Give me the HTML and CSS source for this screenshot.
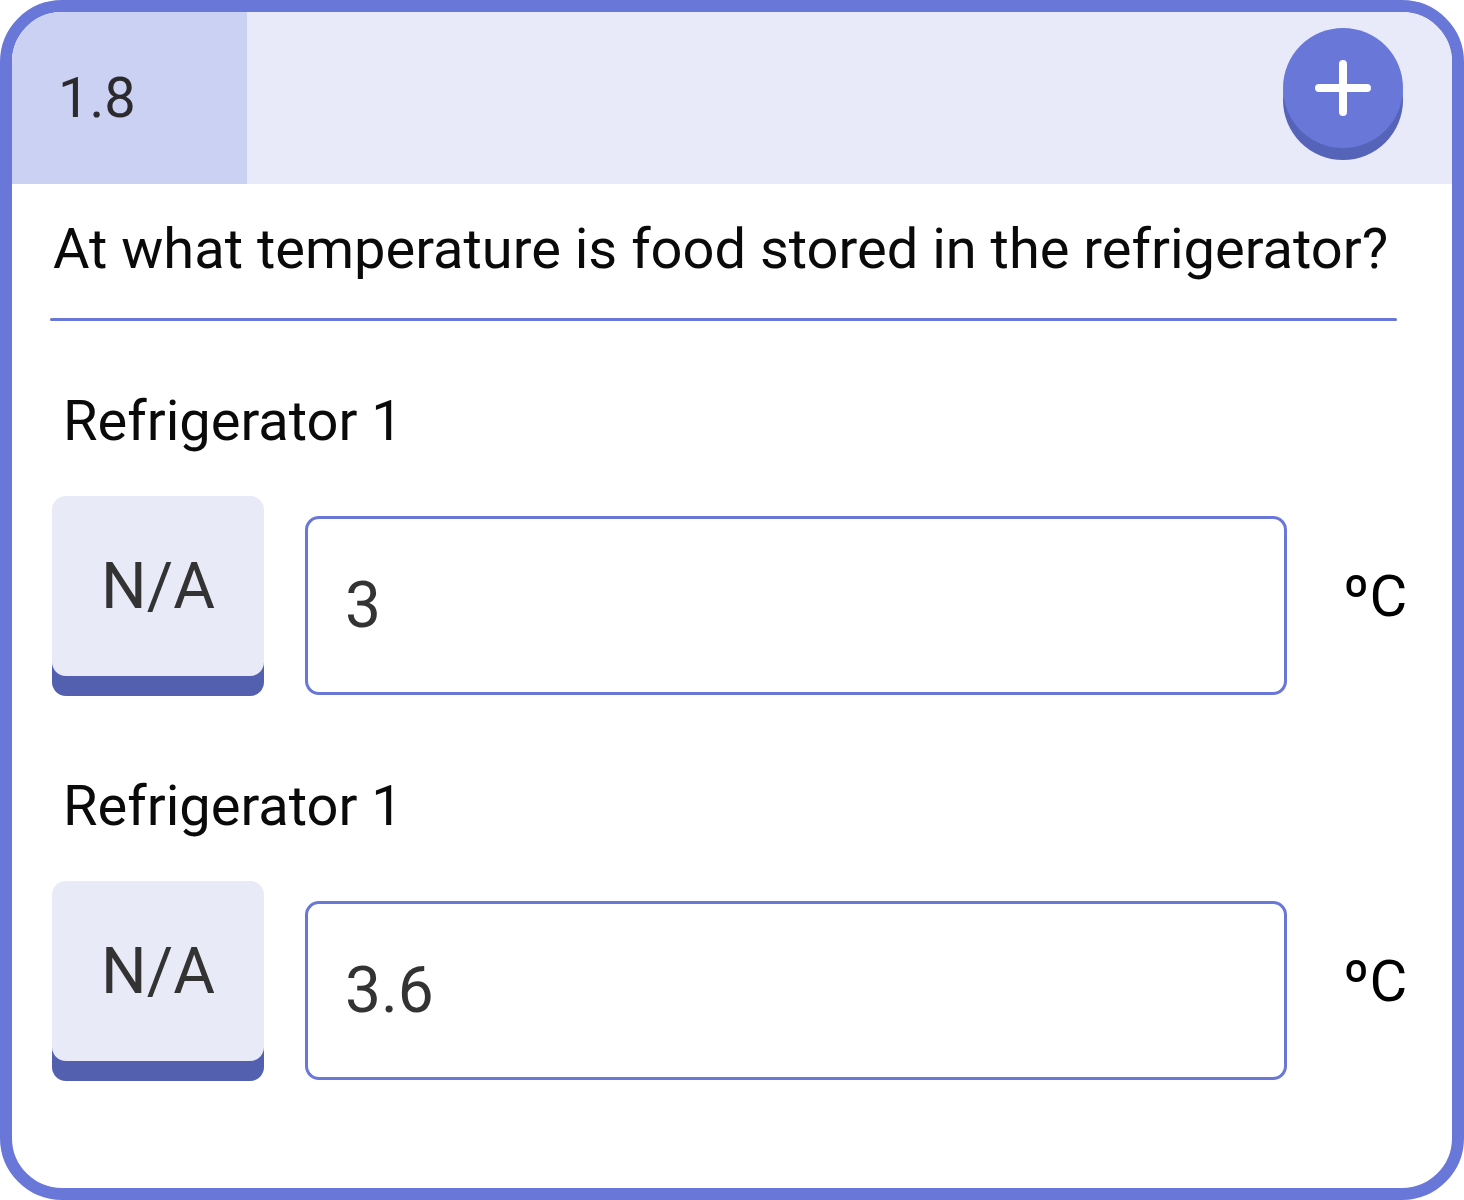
FILE: index.html
```html
<!DOCTYPE html>
<html lang="en">
<head>
<meta charset="utf-8">
<title>Question 1.8</title>
<link rel="stylesheet" href="styles.css">
</head>
<body>
<div class="card">
  <div class="card-header">
    <div class="q-number">1.8</div>
    <button class="add-btn" type="button" aria-label="Add">
      <svg width="60" height="60" viewBox="0 0 60 60" aria-hidden="true">
        <path d="M30 6 V54 M6 30 H54" stroke="#ffffff" stroke-width="8" stroke-linecap="round" fill="none"/>
      </svg>
    </button>
  </div>
  <div class="card-body">
    <div class="question">At what temperature is food stored in the refrigerator?</div>
    <div class="divider"></div>
    <div class="entry">
      <div class="entry-label">Refrigerator 1</div>
      <div class="entry-row">
        <button class="na-btn" type="button">N/A</button>
        <div class="value-box">3</div>
        <div class="unit">ºC</div>
      </div>
    </div>
    <div class="entry">
      <div class="entry-label">Refrigerator 1</div>
      <div class="entry-row">
        <button class="na-btn" type="button">N/A</button>
        <div class="value-box">3.6</div>
        <div class="unit">ºC</div>
      </div>
    </div>
  </div>
</div>
</body>
</html>
```
FILE: styles.css
```css
html, body {
  margin: 0;
  padding: 0;
  background: #ffffff;
}

body {
  font-family: Roboto, "Liberation Sans", sans-serif;
}

.card {
  width: 1464px;
  height: 1200px;
  box-sizing: border-box;
  border: 12px solid #6877d8;
  border-radius: 62px;
  overflow: hidden;
  background: #ffffff;
}

.card-header {
  height: 172px;
  display: flex;
  align-items: flex-start;
  background: #e8eaf9;
}

.q-number {
  width: 235px;
  height: 172px;
  flex-shrink: 0;
  box-sizing: border-box;
  padding-left: 46px;
  display: flex;
  align-items: center;
  background: #cbd1f2;
  font-size: 56px;
  color: #2b2b2f;
}

.add-btn {
  margin-left: auto;
  margin-right: 49px;
  margin-top: 16px;
  width: 120px;
  height: 120px;
  flex-shrink: 0;
  border: none;
  padding: 0;
  border-radius: 50%;
  background: #6877d8;
  box-shadow: 0 12px 0 #5563b8;
  display: flex;
  align-items: center;
  justify-content: center;
  cursor: pointer;
}

.card-body {
  padding: 33px 55px 0 38px;
}

.question {
  font-size: 56px;
  line-height: 64px;
  color: #0a0a0a;
  padding-left: 3px;
  white-space: nowrap;
}

.divider {
  margin-top: 37px;
  height: 3px;
  background: #6877d8;
  border-radius: 2px;
}

.entry {
  margin-top: 68px;
}

.entry + .entry {
  margin-top: 78px;
}

.entry-label {
  font-size: 56px;
  line-height: 64px;
  color: #0a0a0a;
  padding-left: 13px;
}

.entry-row {
  margin-top: 43px;
  display: flex;
  align-items: flex-start;
  padding-left: 2px;
}

.na-btn {
  width: 212px;
  height: 180px;
  flex-shrink: 0;
  border: none;
  padding: 0;
  border-radius: 14px;
  background: #e8eaf8;
  box-shadow: 0 20px 0 #5360b0;
  font-family: Roboto, "Liberation Sans", sans-serif;
  font-size: 64px;
  color: #333333;
  margin-bottom: 20px;
  cursor: pointer;
}

.value-box {
  margin-left: 41px;
  margin-top: 20px;
  width: 982px;
  height: 179px;
  flex-shrink: 0;
  box-sizing: border-box;
  border: 3px solid #6877d8;
  border-radius: 14px;
  padding-left: 37px;
  display: flex;
  align-items: center;
  font-size: 64px;
  color: #333333;
}

.unit {
  margin-left: 56px;
  height: 200px;
  flex-shrink: 0;
  display: flex;
  align-items: center;
  font-size: 58px;
  color: #000000;
}
```
